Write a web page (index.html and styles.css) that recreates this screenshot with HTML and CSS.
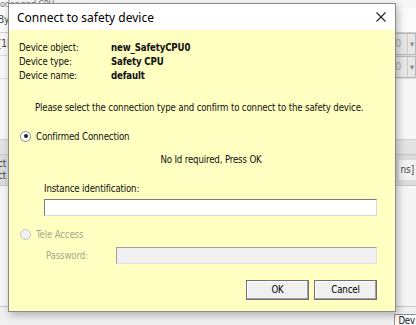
FILE: index.html
```html
<!DOCTYPE html>
<html lang="en">
<head>
    <meta charset="UTF-8">
    <title>Connect to safety device</title>
    <link rel="stylesheet" href="styles.css">
</head>
<body>

<!-- application behind the dialog -->
<div class="app">
    <div class="app-row top-row"><span>odes and CPU</span></div>
    <div class="app-row"><span class="frag">By</span></div>
    <div class="app-row sel-row">
        <span class="frag">[1E</span>
        <span class="combo"><span>0</span><b>&#9662;</b></span>
    </div>
    <div class="app-row sel-row">
        <span class="frag"></span>
        <span class="combo"><span>0</span><b>&#9662;</b></span>
    </div>
    <div class="app-spacer"></div>
    <div class="app-band"></div>
    <div class="app-row grid-row">
        <span class="frag">ct<br>ct</span>
        <span class="frag right">ns]</span>
    </div>
    <div class="app-fill"></div>
    <div class="app-foot"><span class="dev-btn">Dev</span></div>
</div>

<!-- dialog -->
<div class="dialog">
    <div class="title-bar">
        <span class="title">Connect to safety device</span>
        <span class="close">
            <svg width="10" height="10" viewBox="0 0 10 10"><path d="M0.5 0.5 L9.5 9.5 M9.5 0.5 L0.5 9.5" stroke="#222" stroke-width="1.1" fill="none"/></svg>
        </span>
    </div>

    <div class="dialog-body">
        <div class="info">
            <span>Device object:</span><b>new_SafetyCPU0</b>
            <span>Device type:</span><b>Safety CPU</b>
            <span>Device name:</span><b>default</b>
        </div>

        <p class="prompt">Please select the connection type and confirm to connect to the safety device.</p>

        <label class="radio-row">
            <span class="radio checked"></span>
            <span>Confirmed Connection</span>
        </label>

        <p class="hint">No Id required, Press OK</p>

        <div class="field">
            <span>Instance identification:</span>
            <span class="input"></span>
        </div>

        <label class="radio-row disabled">
            <span class="radio"></span>
            <span>Tele Access</span>
        </label>

        <div class="password-row">
            <span>Password:</span>
            <span class="input off"></span>
        </div>

        <div class="buttons">
            <span class="button">OK</span>
            <span class="button">Cancel</span>
        </div>
    </div>
</div>

</body>
</html>
```

FILE: styles.css
```css
body {
    margin: 0;
    width: 416px;
    height: 325px;
    overflow: hidden;
    position: relative;
    background-color: #f3f3f3;
    font-family: 'DejaVu Sans Condensed', 'Liberation Sans', sans-serif;
    font-size: 9.6px;
    letter-spacing: -0.15px;
    color: #000;
}

/* application in the background */
.app {
    display: flex;
    flex-direction: column;
    height: 325px;
    background-color: #f7f7f7;
    color: #333;
}

.app-row {
    display: flex;
    justify-content: space-between;
    align-items: center;
}

.top-row {
    height: 8px;
    overflow: hidden;
    font-size: 9px;
    line-height: 4px;
    color: #777;
}

.app-row .frag {
    font-size: 10px;
    line-height: 12px;
    color: #444;
    margin-left: -2px;
}

.app-row:nth-child(2) {
    height: 24px;
    border-bottom: 1px solid #d0d0d0;
    background-color: #fbfbfb;
}

.sel-row {
    height: 22px;
    border-bottom: 1px solid #dcdcdc;
}

.combo {
    display: flex;
    height: 20px;
    width: 22px;
    border: 1px solid #b8b8b8;
    background-color: #e8e8e8;
    color: #aaa;
    font-size: 11px;
}

.combo span {
    width: 12px;
    padding-left: 2px;
    line-height: 20px;
}

.combo b {
    font-weight: normal;
    font-size: 9px;
    color: #888;
    line-height: 20px;
    border-left: 1px solid #c8c8c8;
    padding-left: 2px;
}

.app-spacer {
    height: 60px;
    background-color: #f7f7f7;
}

.app-band {
    height: 14px;
    background-color: #e3e3e3;
    border-top: 1px solid #cfcfcf;
}

.grid-row {
    height: 30px;
    border-top: 1px solid #c8c8c8;
    border-bottom: 1px solid #c8c8c8;
    background-color: #dcdcdc;
}

.grid-row .right {
    background-color: #f2f2f2;
    padding: 4px 4px 4px 2px;
    margin-right: -2px;
}

.app-fill {
    flex: 1;
    background-color: #f5f5f5;
}

.app-foot {
    height: 18px;
    border-top: 1px solid #c8c8c8;
    display: flex;
    justify-content: flex-end;
    align-items: flex-end;
    background-color: #f0f0f0;
}

.dev-btn {
    border: 1px solid #8c8c8c;
    border-bottom: none;
    padding: 0 4px 0 3px;
    height: 10px;
    line-height: 12px;
    margin-right: -4px;
    background-color: #fafafa;
    color: #222;
}

/* the dialog window */
.dialog {
    position: absolute;
    left: 8px;
    top: 3px;
    width: 386px;
    height: 307px;
    border: 1px solid #8a8a8a;
    box-shadow: 2px 3px 8px rgba(0, 0, 0, 0.28);
    display: flex;
    flex-direction: column;
    background-color: #ffffc2;
}

.title-bar {
    height: 26px;
    background-color: #fff;
    display: flex;
    align-items: center;
    justify-content: space-between;
}

.title {
    font-family: 'Noto Sans', sans-serif;
    font-size: 12px;
    letter-spacing: 0;
    padding-left: 8px;
    color: #000;
}

.close {
    width: 10px;
    height: 10px;
    margin-right: 9px;
    display: flex;
}

.dialog-body {
    flex: 1;
    display: flex;
    flex-direction: column;
    color: #111;
}

.info {
    display: grid;
    grid-template-columns: 92px auto;
    grid-auto-rows: 14px;
    align-items: center;
    padding: 10px 0 0 10px;
}

.info b {
    font-weight: bold;
}

.prompt {
    margin: 19px 0 0 26px;
    height: 14px;
    line-height: 14px;
    white-space: nowrap;
}

.radio-row {
    display: flex;
    align-items: center;
    gap: 5px;
    margin: 14px 0 0 11px;
    height: 14px;
}

.radio {
    width: 9px;
    height: 9px;
    border-radius: 50%;
    border: 1px solid #8a8a8a;
    background-color: #fff;
    display: flex;
    align-items: center;
    justify-content: center;
}

.radio.checked::after {
    content: "";
    width: 4px;
    height: 4px;
    border-radius: 50%;
    background-color: #222;
}

.radio-row.disabled {
    color: #a8a888;
    margin-top: 11px;
}

.radio-row.disabled .radio {
    border-color: #c4c4c4;
    background-color: #f2f2f2;
}

.hint {
    margin: 10px 0 0 0;
    padding-left: 18px;
    text-align: center;
    height: 14px;
    line-height: 14px;
}

.field {
    display: flex;
    flex-direction: column;
    margin: 15px 18px 0 35px;
}

.field span:first-child {
    height: 14px;
    line-height: 14px;
}

.input {
    height: 15px;
    border: 1px solid #7a7a7a;
    border-right-color: #d8d8d8;
    border-bottom-color: #d8d8d8;
    background-color: #fff;
    margin-top: 3px;
}

.password-row {
    display: flex;
    align-items: center;
    margin: 6px 18px 0 37px;
    color: #a8a888;
}

.password-row span:first-child {
    width: 70px;
}

.input.off {
    flex: 1;
    margin-top: 0;
    height: 15px;
    background-color: #f0f0f0;
    border-color: #a0a0a0 #e0e0e0 #e0e0e0 #a0a0a0;
}

.buttons {
    display: flex;
    justify-content: flex-end;
    gap: 5px;
    margin: 16px 18px 0 0;
}

.button {
    width: 61px;
    height: 18px;
    line-height: 18px;
    text-align: center;
    background-color: #f0f0f0;
    border: 1px solid #707070;
    box-shadow: inset -1px -1px 0 #a0a0a0, inset 1px 1px 0 #fff;
    color: #000;
}
```
